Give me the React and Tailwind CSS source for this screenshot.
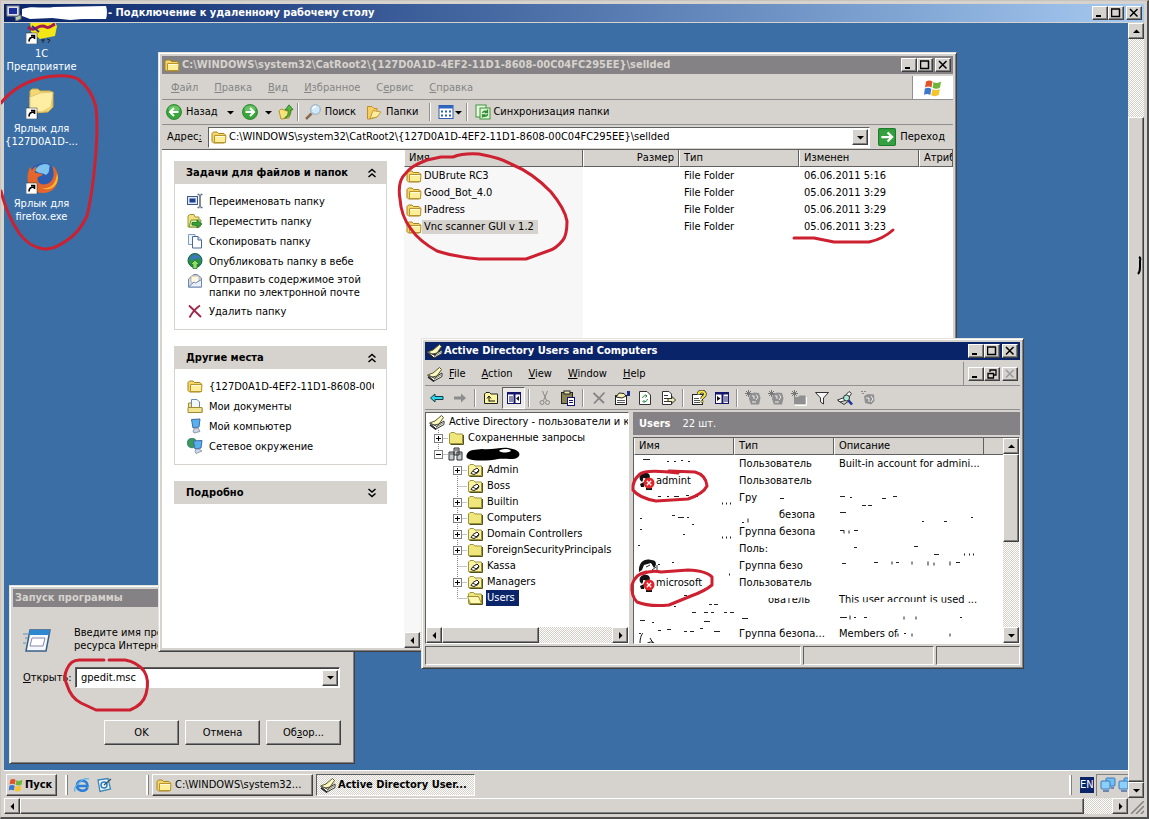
import React, { useState } from "react";

const RAISED =
  "border border-t-white border-l-white border-r-[#404040] border-b-[#404040] shadow-[inset_-1px_-1px_#808080]";
const WINDOW =
  "border border-t-[#e4e2dc] border-l-[#e4e2dc] border-r-[#404040] border-b-[#404040] shadow-[inset_1px_1px_#fff,inset_-1px_-1px_#808080] bg-[#d6d3ce]";
const SUNKEN =
  "border border-t-[#606060] border-l-[#606060] border-r-white border-b-white";
const DITHER =
  "bg-[conic-gradient(#fff_25%,#d4d0c8_0_50%,#fff_0_75%,#d4d0c8_0)] bg-[length:2px_2px]";

function Svg({ children, size = 16, box = 16 }) {
  return (
    <svg
      width={size}
      height={size}
      viewBox={`0 0 ${box} ${box}`}
      className="shrink-0"
      aria-hidden="true"
    >
      {children}
    </svg>
  );
}

function FolderIcon() {
  return (
    <Svg>
      <path d="M1 12.5V4.5L2.5 3H6l1.5 1.500H13L14.500 6v7L13.500 14H2.500Z" fill="#f5d76a" stroke="#a8841c" />
      <path d="M3.500 6.500H15L14.500 13.500H3.500Z" fill="#fdee9a" stroke="#b8942c" />
      <path d="M4.500 7.500h9" stroke="#fffbe0" />
    </Svg>
  );
}

function TreeFolder({ kind }) {
  return (
    <Svg>
      <path d="M1.500 13.500V4L3 2.500H6.500L8 4H14.500V13.500Z" fill={kind === "ou" ? "#fbf3a4" : "#efe77c"} stroke="#9c9438" />
      <path d="M15.500 5V14.500H2.500" fill="none" stroke="#56521e" />
      {kind === "ou" && (
        <path d="M4 11.500L6 8.500L10 6L12 8L11 10.500L7 12.500Z" fill="#fff" stroke="#222" />
      )}
      {kind === "ou" && <path d="M6 9L9 11L12 8" fill="none" stroke="#222" />}
      {kind === "open" && (
        <path d="M0.500 6.500H11.500L14.500 13.500H3.500Z" fill="#fdf8b4" stroke="#9c9438" />
      )}
    </Svg>
  );
}

function BookIcon() {
  return (
    <Svg>
      <path d="M0.500 9L6 7L12.500 1.500L14.500 3.500L10 10L3 11.500Z" fill="#fbf8c0" stroke="#55542c" />
      <path d="M1 9.500L7 15L15 10.500V7L10 10L8 12.500L2 9.500" fill="#fff" stroke="#333" />
      <path d="M7 13.500L14 9" stroke="#8a8a60" />
      <path d="M1 11L7 15.500" stroke="#222" strokeWidth="1.500" />
    </Svg>
  );
}

function FlagIcon({ size }) {
  return (
    <Svg size={size} box={20}>
      <path d="M3 3.500C5 2 7.500 2 9.500 3.500L8.500 9.500C6.500 8 4 8.200 2 9.500Z" fill="#e0542c" />
      <path d="M10.500 4C13 5.500 15.500 5 18 3.500L17 9.500C14.500 11 12 11 9.600 9.800Z" fill="#6fb53c" />
      <path d="M1.800 10.800C4 9.500 6.500 9.500 8.300 11L7.300 17C5 15.500 3 15.500 1 17Z" fill="#3c78d0" />
      <path d="M9.300 11.200C12 12.500 14.500 12 16.800 11L15.800 17C13 18.500 11 18.500 8.300 17.200Z" fill="#f5c52c" />
    </Svg>
  );
}

function RoundArrow({ back }) {
  return (
    <Svg>
      <circle cx="8" cy="8" r="7.500" fill="#3aa53a" stroke="#1f7d24" strokeWidth="0.800" />
      <ellipse cx="8" cy="5" rx="5.500" ry="3.500" fill="#7fd07a" opacity="0.7" />
      <path
        d={back ? "M12.500 8H4.500M8 4L4 8L8 12" : "M3.500 8H11.500M8 4L12 8L8 12"}
        fill="none"
        stroke="#fff"
        strokeWidth="2"
      />
    </Svg>
  );
}

function UpFolderIcon() {
  return (
    <Svg>
      <path d="M1 7L3 5L9 7L14 5.500L11 14L3 15Z" fill="#f8e27a" stroke="#b8962c" />
      <path d="M6.500 14C11 11 10 8 10 6H7L11 0.800L15 5.500L12.500 6C12.500 10 12 13 6.500 14Z" fill="#4fb93c" stroke="#23752a" strokeWidth="0.800" />
    </Svg>
  );
}

function SearchIcon() {
  return (
    <Svg>
      <path d="M1 15L6.500 9.500" stroke="#8b6a50" strokeWidth="2.500" />
      <circle cx="10.500" cy="5.500" r="4.800" fill="#cfe8fa" stroke="#8fa8c0" />
      <path d="M8 5a3 3 0 0 1 3-2.500" fill="none" stroke="#fff" strokeWidth="1.500" />
    </Svg>
  );
}

function FoldersIcon() {
  return (
    <Svg>
      <path d="M1.500 2.500H6L8 4.500H11V13L4 15H1.500Z" fill="#f6cf62" stroke="#c08f28" />
      <path d="M4 14.500L7 6.500L15 8L11 13Z" fill="#fdeea0" stroke="#c59a34" />
    </Svg>
  );
}

function ViewsIcon() {
  return (
    <Svg>
      <rect x="1" y="1.500" width="14" height="13" fill="#fff" stroke="#2c5fb4" />
      <rect x="1" y="1.500" width="14" height="3" fill="#2f66c0" />
      <path d="M3 7.500h10M3 11.500h10" stroke="#2c5fb4" strokeWidth="2" strokeDasharray="2 2" />
    </Svg>
  );
}

function SyncIcon() {
  return (
    <Svg>
      <rect x="1" y="1" width="10" height="12" fill="#e8f7de" stroke="#3e9440" />
      <rect x="5" y="4" width="10" height="11" fill="#dff3d2" stroke="#3e9440" />
      <path d="M7.500 9a3 3 0 0 1 5-1M12.700 10a3 3 0 0 1-5 1.500M12.500 5.500v3h-3M7.500 13.500v-2.500h3" fill="none" stroke="#2c8a34" strokeWidth="1.300" />
    </Svg>
  );
}

function GoIcon() {
  return (
    <Svg size={18}>
      <rect x="0.500" y="0.500" width="15" height="15" rx="1" fill="#35a040" stroke="#1e7d2a" />
      <path d="M3 8H12M8.500 4L12.500 8L8.500 12" fill="none" stroke="#fff" strokeWidth="2" />
    </Svg>
  );
}

function TaskIcon({ name }) {
  switch (name) {
    case "rename":
      return (
        <Svg>
          <rect x="0.500" y="3.500" width="10" height="8" fill="#dfe9f8" stroke="#405a88" />
          <rect x="2.500" y="5.500" width="6" height="4" fill="#1c3f94" />
          <path d="M10.500 1.500h2M13.500 1.500h2M13 2v12M10.500 14.500h2M13.500 14.500h2" stroke="#56657c" strokeWidth="1.500" />
        </Svg>
      );
    case "move":
      return (
        <Svg>
          <path d="M1 14V3L3 1.500H7L8 4H12V14Z" fill="#f6e07c" stroke="#9a9a3c" />
          <path d="M2 14L4 7H14L13 14Z" fill="#d9efa0" stroke="#7a9434" />
          <path d="M5 12V9.500H10V7L15 11L10 15V12.500Z" fill="#36a036" stroke="#1c6c24" strokeWidth="0.800" />
        </Svg>
      );
    case "copy":
      return (
        <Svg>
          <path d="M1.500 1.500H8V11.500H1.500Z" fill="#eef5fd" stroke="#7f9cc4" />
          <path d="M5.500 3.500H11L14.500 7V15H5.500Z" fill="#fff" stroke="#496894" />
          <path d="M11 3.500V7H14.500" fill="#cfe0f4" stroke="#496894" />
        </Svg>
      );
    case "web":
      return (
        <Svg>
          <circle cx="8" cy="7.500" r="7" fill="#2a9050" stroke="#1c5a58" />
          <path d="M1.500 5C4 6 4 2 8 1.500C12 2 13 4 14.500 6L10 5L6 7Z" fill="#3c78c0" />
          <path d="M8 7L12.500 11.500H10V15.500H6V11.500H3.500Z" fill="#8fe060" stroke="#1d6b24" strokeWidth="0.700" />
        </Svg>
      );
    case "mail":
      return (
        <Svg>
          <path d="M1.500 6L7 1.500H10L14.500 5V14H1.500Z" fill="#cddcf0" stroke="#7088ac" />
          <path d="M4 3H12V9L8 11L4 9Z" fill="#fff8e4" stroke="#b0a088" strokeWidth="0.700" />
          <path d="M1.500 14L7 9L8.500 10L14.500 6.500V14Z" fill="#e8f0fb" stroke="#7088ac" />
        </Svg>
      );
    case "delete":
      return (
        <Svg>
          <path d="M2 2.500L14 14M13 2.500C9 5 5 10 2.500 14.500" fill="none" stroke="#a02448" strokeWidth="1.800" />
        </Svg>
      );
    case "docs":
      return (
        <Svg>
          <path d="M1.500 5H5V10H15V14.500H1.500Z" fill="#f4e288" stroke="#a08c34" />
          <path d="M4.500 1.500H10L12.500 4V11H4.500Z" fill="#f2f8fe" stroke="#6c88b0" />
          <path d="M1 9.500H15V14.500H1Z" fill="#f1e594" stroke="#a08c34" />
        </Svg>
      );
    case "network":
      return (
        <Svg>
          <circle cx="5" cy="5" r="4.800" fill="#3a9a5c" stroke="#2a6a70" strokeWidth="0.700" />
          <path d="M6.500 3L15 2.500L14 10L8 11Z" fill="#58b0f0" stroke="#3d6aa4" />
          <path d="M9 11h3l3 2-6 2.500-1-2z" fill="#cdd6e4" stroke="#7884a0" strokeWidth="0.700" />
        </Svg>
      );
    case "computer":
      return (
        <Svg>
          <path d="M4.500 1.500L13 1L12 9L6 10Z" fill="#58b0f0" stroke="#3d6aa4" />
          <path d="M8 10h3l2 3.500-6 1.500-1-2z" fill="#cdd6e4" stroke="#7884a0" strokeWidth="0.800" />
        </Svg>
      );
    default:
      return <FolderIcon />;
  }
}

function ToolIcon({ name }) {
  switch (name) {
    case "back":
      return (
        <Svg>
          <path d="M1.500 8L6 4V6.500H14V9.500H6V12Z" fill="#2cd8e8" stroke="#103c50" />
        </Svg>
      );
    case "forward":
      return (
        <Svg>
          <path d="M14 8L9 3.500V6.500H2V9.500H9V12.500Z" fill="#8c8c8c" />
        </Svg>
      );
    case "up":
      return (
        <Svg>
          <path d="M1.500 13.500V4L3 2.500H6.500L8 4H14.500V13.500Z" fill="#fdf6a0" stroke="#222" />
          <path d="M6 11.500V7M4 8.500L6 6L8 8.500M6 11h6" fill="none" stroke="#111" />
        </Svg>
      );
    case "panel":
      return (
        <Svg>
          <rect x="1.500" y="2.500" width="13" height="11" fill="#fff" stroke="#14146c" />
          <path d="M1.500 3.500h13M8.500 3v10" stroke="#14146c" strokeWidth="2" />
          <path d="M3 7h4M3 9h4M3 11h4" stroke="#14146c" />
          <path d="M13 6v5L10 8.500Z" fill="#111" />
        </Svg>
      );
    case "cut":
      return (
        <Svg>
          <path d="M5.500 1L9.500 10.500M10.500 1L6.500 10.500" stroke="#888" fill="none" />
          <circle cx="5" cy="12.500" r="2" fill="none" stroke="#888" />
          <circle cx="10.500" cy="12.500" r="2" fill="none" stroke="#888" />
        </Svg>
      );
    case "paste":
      return (
        <Svg>
          <rect x="1.500" y="2.500" width="11" height="11" fill="#8a8450" stroke="#222" />
          <rect x="4" y="1" width="6" height="3" fill="#e8e4b0" stroke="#222" />
          <rect x="7.500" y="7.500" width="7" height="8" fill="#fff" stroke="#14146c" />
          <path d="M9 10.500h4M9 12.500h4" stroke="#14146c" />
        </Svg>
      );
    case "delete":
      return (
        <Svg>
          <path d="M2.500 3L13 13M13.500 2.500L3 13.500" stroke="#858585" strokeWidth="1.800" />
        </Svg>
      );
    case "props":
      return (
        <Svg>
          <rect x="1.500" y="5.500" width="11" height="9" fill="#fff" stroke="#222" />
          <path d="M3 10.500h8M3 12.500h8" stroke="#555" />
          <path d="M2 7L5 3L10 3.500L12 6L8 8Z" fill="#f4f0b0" stroke="#222" />
          <path d="M13 1h3v5h-3z" fill="#1c2f8c" />
        </Svg>
      );
    case "refresh":
      return (
        <Svg>
          <path d="M2.500 1.500H10L13.500 5V14.500H2.500Z" fill="#fff" stroke="#333" />
          <path d="M5.500 8a3 3 0 0 1 4-2M10.500 9a3 3 0 0 1-4 2.500M8.500 4.500l1.500 1.500-1.500 1.500M7.500 13L6 11.500 7.500 10" fill="none" stroke="#2d8a3c" />
        </Svg>
      );
    case "export":
      return (
        <Svg>
          <path d="M2.500 1.500H9L11.500 4V14.500H2.500Z" fill="#fff" stroke="#333" />
          <path d="M4 5.500h4M4 8.500h4M4 11.500h4" stroke="#333" />
          <path d="M8 8.500H12V6.500L15.500 10L12 13.500V11.500H8Z" fill="#f2ecb0" stroke="#333" />
        </Svg>
      );
    case "help":
      return (
        <Svg>
          <rect x="1.500" y="4.500" width="10" height="10" fill="#fff" stroke="#222" />
          <path d="M3 8.500h5M3 10.500h6M3 12.500h6" stroke="#555" />
          <path d="M7.500 4.500C7.500 0.500 14.500 0.500 14 4.500C14 6.500 11 6.500 11 9" fill="none" stroke="#333" strokeWidth="3.500" />
          <path d="M7.500 4.500C7.500 0.500 14.500 0.500 14 4.500C14 6.500 11 6.500 11 9" fill="none" stroke="#f6e540" strokeWidth="2" />
          <circle cx="11" cy="11.500" r="1.300" fill="#f6e540" stroke="#333" strokeWidth="0.600" />
        </Svg>
      );
    case "panelRight":
      return (
        <Svg>
          <rect x="1.500" y="2.500" width="13" height="11" fill="#fff" stroke="#14146c" />
          <path d="M1.500 3.500h13M8.500 3v10" stroke="#14146c" strokeWidth="2" />
          <path d="M10 7h4M10 9h4M10 11h4" stroke="#14146c" />
          <path d="M3 6v5L6.500 8.500Z" fill="#111" />
        </Svg>
      );
    case "filter":
      return (
        <Svg>
          <path d="M1.500 2.500H14.500L9.500 8V14L6.500 12V8Z" fill="#f4f4f4" stroke="#333" />
        </Svg>
      );
    case "find":
      return (
        <Svg>
          <path d="M0.500 10L6 8L12 1.500L14.500 3.500L10 10L3 12Z" fill="#fff" stroke="#333" />
          <path d="M1 10.500L7 14.500L13 10" fill="none" stroke="#333" />
          <circle cx="9.500" cy="8" r="3" fill="#a5ecd8" stroke="#333" />
          <path d="M11.500 10.500L15 14.500" stroke="#1c2f9c" strokeWidth="2.500" />
        </Svg>
      );
    case "folderNew":
      return (
        <Svg>
          <path d="M1 1l5 5M6 1L1 6M3.500 0v7M0 3.500h7" stroke="#777" />
          <path d="M3 7H7L8.500 5.500H14.500V14H3Z" fill="#909090" />
          <path d="M15.500 7V15.500H4" fill="none" stroke="#fff" />
        </Svg>
      );
    case "history":
      return (
        <Svg>
          <path d="M1 1.500h5M2 3.500h3" stroke="#888" strokeDasharray="2 1" />
          <path d="M4 6L8 4L14 4.500L14.500 11L11 14.500L5 13Z" fill="#919191" />
          <path d="M6 8h3v4M11 6l2 3-2 3" fill="none" stroke="#f0f0f0" />
        </Svg>
      );
    default:
      return (
        <Svg>
          <path d="M1 1l5 5M6 1L1 6M3.500 0v7M0 3.500h7" stroke="#777" />
          <path d="M5 4L9 2.500L14 3L15.500 8L14 14.500H6L4 9Z" fill="#8f8f8f" />
          <path d="M7 6h2v3M11 4.500l2 2.500-2 3M7 12h4" fill="none" stroke="#efefef" />
        </Svg>
      );
  }
}

function Arrow({ dir }) {
  const paths = {
    up: "M1 6L4.500 2.500L8 6Z",
    down: "M1 3L4.500 6.500L8 3Z",
    left: "M6 1L2.500 4.500L6 8Z",
    right: "M3 1L6.500 4.500L3 8Z",
  };
  return (
    <Svg size={9} box={9}>
      <path d={paths[dir]} fill="#000" />
    </Svg>
  );
}

function ScrollButton({ dir, label }) {
  return (
    <button
      type="button"
      aria-label={label}
      className={`flex size-4 shrink-0 items-center justify-center bg-[#d6d3ce] ${RAISED}`}
    >
      <Arrow dir={dir} />
    </button>
  );
}

function CaptionButton({ kind, disabled }) {
  const color = disabled ? "#999" : "#000";
  return (
    <button
      type="button"
      aria-label={kind}
      disabled={disabled}
      className={`flex h-[14px] w-4 items-center justify-center bg-[#d6d3ce] ${RAISED}`}
    >
      <Svg size={10} box={10}>
        {kind === "minimize" && <path d="M1 8h5" stroke={color} strokeWidth="2" />}
        {kind === "maximize" && (
          <path d="M0.500 1V8.500H8.500V1M0 1H9" fill="none" stroke={color} strokeWidth="1.500" />
        )}
        {kind === "restore" && (
          <path d="M3 3V1H9V6H6.500M1 4.500H6.500V9H1Z" fill="none" stroke={color} strokeWidth="1.300" />
        )}
        {kind === "close" && (
          <path d="M1 1L8.500 8.500M8.500 1L1 8.500" stroke={color} strokeWidth="1.500" />
        )}
      </Svg>
    </button>
  );
}

function CaptionButtons() {
  return (
    <div className="ml-auto flex pr-[2px]">
      <CaptionButton kind="minimize" />
      <CaptionButton kind="maximize" />
      <div className="ml-[2px] flex">
        <CaptionButton kind="close" />
      </div>
    </div>
  );
}

function Separator() {
  return (
    <div className="mx-[3px] h-[18px] w-[2px] shrink-0 border-l border-l-[#909090] border-r border-r-white" />
  );
}

// The letter at `at` is the keyboard shortcut
function Hot({ text, at = 0 }) {
  return (
    <>
      {text.slice(0, at)}
      <u>{text[at]}</u>
      {text.slice(at + 1)}
    </>
  );
}

const desktopIcons = [
  { id: "1c", lines: ["1С", "Предприятие"] },
  { id: "folder", lines: ["Ярлык для", "{127D0A1D-..."] },
  { id: "firefox", lines: ["Ярлык для", "firefox.exe"] },
];

function DesktopIcon({ id }) {
  return (
    <Svg size={32} box={32}>
      {id === "1c" && (
        <>
          <path d="M4 8L26 4L31 14L29 24L14 27L5 20Z" fill="#f4e614" />
          <path d="M2 15C10 22 12 10 20 15C24 17 26 13 29 12" fill="none" stroke="#a01c50" strokeWidth="3" />
          <path d="M6 14L13 20M16 10L28 8" stroke="#3a3090" strokeWidth="2" />
          <path d="M17 27v4M15 28h4M21 27l3 1-2 3" fill="none" stroke="#222" />
        </>
      )}
      {id === "folder" && (
        <>
          <path d="M4 22V4L6 2H12L14 4H24L27 6V20L22 25L6 26Z" fill="#f3d873" stroke="#d0ac44" />
          <path d="M4 10L14 6L27 5L25 20L16 25L4 24Z" fill="#fdeea4" stroke="#e4c870" />
        </>
      )}
      {id === "firefox" && (
        <>
          <circle cx="17" cy="15" r="14" fill="#2c5db0" />
          <path d="M9 8C13 2 20 0 24 4C22 6 25 10 20 13C15 10 12 12 9 8Z" fill="#7fc4ee" />
          <path d="M4 5C-2 18 3 31 17 31C29 31 34 20 31 10C30 6 27 4 26 4C29 11 28 20 21 22C14 24 10 19 12 15L17 13C14 11 10 11 9 11C9 8 10 5 11 4C8 5 7 7 6 8Z" fill="#e5662a" />
          <path d="M31 11C30 23 24 27 16 26C24 30 32 24 32 15Z" fill="#f8b838" />
        </>
      )}
      <rect x="0" y="21" width="11" height="11" fill="#fff" stroke="#222" strokeWidth="0.500" />
      <path d="M3 29.500C3 26 5 25 8 25M5 23.500H8.500V27" fill="none" stroke="#000" strokeWidth="1.600" />
    </Svg>
  );
}

const tasks = [
  { icon: "rename", text: "Переименовать папку" },
  { icon: "move", text: "Переместить папку" },
  { icon: "copy", text: "Скопировать папку" },
  { icon: "web", text: "Опубликовать папку в вебе" },
  { icon: "mail", text: "Отправить содержимое этой папки по электронной почте" },
  { icon: "delete", text: "Удалить папку" },
];

const places = [
  { icon: "folder", text: "{127D0A1D-4EF2-11D1-8608-00C" },
  { icon: "docs", text: "Мои документы" },
  { icon: "computer", text: "Мой компьютер" },
  { icon: "network", text: "Сетевое окружение" },
];

function TaskPanel({ title, items }) {
  return (
    <section>
      <h2 className="bg-[#d6d3ce]">
        <button type="button" className="flex h-[23px] w-full items-center justify-between pr-[10px] pl-3 font-bold">
          {title}
          <Svg size={10} box={10}>
            <path
              d={items ? "M1.500 4.500L5 1.500L8.500 4.500M1.500 9L5 6L8.500 9" : "M1.500 1L5 4L8.500 1M1.500 5.500L5 8.500L8.500 5.500"}
              fill="none"
              stroke="#000"
              strokeWidth="1.500"
            />
          </Svg>
        </button>
      </h2>
      {items && (
        <ul className="flex flex-col gap-1 border border-t-0 border-[#d6d3ce] px-3 pt-[9px] pb-[10px]">
          {items.map((item) => (
            <li key={item.text}>
              <button type="button" className="flex min-h-4 w-full items-center gap-[6px] text-left leading-[13px]">
                <span className="h-4 self-start">
                  <TaskIcon name={item.icon} />
                </span>
                <span
                  className={`min-w-0 flex-1 ${
                    item.icon === "folder" ? "overflow-hidden whitespace-nowrap" : ""
                  }`}
                >
                  {item.text}
                </span>
              </button>
            </li>
          ))}
        </ul>
      )}
    </section>
  );
}

const files = [
  { name: "DUBrute RC3", date: "06.06.2011 5:16" },
  { name: "Good_Bot_4.0", date: "05.06.2011 3:29" },
  { name: "IPadress", date: "05.06.2011 3:29" },
  { name: "Vnc scanner GUI v 1.2", date: "05.06.2011 3:23", selected: true },
];

const TH =
  "h-[17px] overflow-hidden border-b border-b-[#606060] border-r border-r-[#606060] border-l border-l-white bg-[#d6d3ce] px-1 font-normal whitespace-nowrap";

function ExplorerWindow() {
  const [path, setPath] = useState(
    "C:\\WINDOWS\\system32\\CatRoot2\\{127D0A1D-4EF2-11D1-8608-00C04FC295EE}\\sellded"
  );

  return (
    <section className={`absolute top-[29px] left-[154px] flex h-[600px] w-[799px] flex-col p-[3px] ${WINDOW}`}>
      <header className="flex h-[18px] items-center gap-[2px] bg-[#848284] pl-[2px] font-bold text-[#d6d3ce]">
        <FolderIcon />
        <h1>C:\WINDOWS\system32\CatRoot2\&#123;127D0A1D-4EF2-11D1-8608-00C04FC295EE&#125;\sellded</h1>
        <CaptionButtons />
      </header>

      <div className="mt-[2px] flex h-6 items-stretch border-b border-[#909090] text-[#858585]">
        <nav className="flex flex-1 items-center gap-4 border-r border-[#909090] pl-[9px]">
          <button type="button"><Hot text="Файл" /></button>
          <button type="button"><Hot text="Правка" /></button>
          <button type="button"><Hot text="Вид" /></button>
          <button type="button"><Hot text="Избранное" /></button>
          <button type="button"><Hot text="Сервис" at={1} /></button>
          <button type="button"><Hot text="Справка" /></button>
        </nav>
        <div className="flex w-10 items-center justify-center bg-white">
          <FlagIcon size={20} />
        </div>
      </div>

      <div className="flex h-[25px] items-center border-b border-[#909090] pl-[4px]">
        <button type="button" className="flex items-center gap-1"><RoundArrow back />Назад</button>
        <button type="button" aria-label="Назад: список" className="w-6 pl-2"><Arrow dir="down" /></button>
        <button type="button" aria-label="Вперед"><RoundArrow /></button>
        <button type="button" aria-label="Вперед: список" className="w-5 pl-[6px]"><Arrow dir="down" /></button>
        <button type="button" aria-label="Вверх"><UpFolderIcon /></button>
        <Separator />
        <button type="button" className="ml-[3px] flex items-center gap-1"><SearchIcon />Поиск</button>
        <button type="button" className="mr-2 ml-[10px] flex items-center gap-1"><FoldersIcon />Папки</button>
        <Separator />
        <button type="button" aria-label="Вид папки" className="ml-1 flex items-center"><ViewsIcon /><Arrow dir="down" /></button>
        <Separator />
        <button type="button" className="ml-1 flex items-center gap-[2px]"><SyncIcon />Синхронизация папки</button>
      </div>

      <div className="flex h-[25px] items-center border-b border-[#606060] pr-2 pl-[5px]">
        <label htmlFor="address" className="w-[41px]"><Hot text="Адрес:" at={5} /></label>
        <div className={`flex h-[21px] min-w-0 flex-1 items-center bg-white pr-px pl-[2px] ${SUNKEN}`}>
          <FolderIcon />
          <input
            id="address"
            value={path}
            onChange={(e) => setPath(e.target.value)}
            className="ml-[2px] min-w-0 flex-1 outline-none"
          />
          <ScrollButton dir="down" label="Список адресов" />
        </div>
        <button type="button" className="ml-2 flex items-center gap-1"><GoIcon />Переход</button>
      </div>

      <div className="flex min-h-0 flex-1 bg-white">
        <aside className="flex w-[242px] shrink-0 flex-col gap-4 pt-[11px] pr-[17px] pl-3">
          <TaskPanel title="Задачи для файлов и папок" items={tasks} />
          <TaskPanel title="Другие места" items={places} />
          <TaskPanel title="Подробно" />
        </aside>
        <div className="flex min-w-0 flex-1 flex-col justify-between overflow-hidden bg-[linear-gradient(to_right,#f7f7f7_179px,#fff_179px)]">
          <table className="w-full table-fixed border-separate border-spacing-0 text-left">
            <thead>
              <tr>
                <th className={`w-[179px] ${TH}`}>Имя</th>
                <th className={`w-[96px] text-right ${TH}`}>Размер</th>
                <th className={`w-[120px] ${TH}`}>Тип</th>
                <th className={`w-[120px] ${TH}`}>Изменен</th>
                <th className={TH}>Атриб</th>
              </tr>
            </thead>
            <tbody>
              {files.map((file) => (
                <tr key={file.name} className="h-[17px]">
                  <td className="p-0 pl-[2px]">
                    <div className="flex items-center">
                      <FolderIcon />
                      <span className={file.selected ? "bg-[#d6d3ce] pr-1 pl-[2px]" : "pl-[2px]"}>
                        {file.name}
                      </span>
                    </div>
                  </td>
                  <td />
                  <td className="p-0 pl-[5px]">File Folder</td>
                  <td className="p-0 pl-[5px]">{file.date}</td>
                  <td />
                </tr>
              ))}
            </tbody>
          </table>
          <div className={`flex justify-between ${DITHER}`}>
            <ScrollButton dir="left" label="Влево" />
            <ScrollButton dir="right" label="Вправо" />
          </div>
        </div>
      </div>
    </section>
  );
}

const treeNodes = [
  { text: "Admin", kind: "ou", expander: true },
  { text: "Boss", kind: "ou" },
  { text: "Builtin", kind: "folder", expander: true },
  { text: "Computers", kind: "folder", expander: true },
  { text: "Domain Controllers", kind: "ou", expander: true },
  { text: "ForeignSecurityPrincipals", kind: "folder", expander: true },
  { text: "Kassa", kind: "ou" },
  { text: "Managers", kind: "ou", expander: true },
  { text: "Users", kind: "open", selected: true, last: true },
];

function Branch({ expander, open, last, first }) {
  return (
    <svg width="19" height="16" className="shrink-0" aria-hidden="true">
      <path
        d={`M9.500 ${first ? 4 : 0}V${last ? 8 : 16}M9.500 8.500H19`}
        stroke="#888"
        strokeDasharray="1 1"
        fill="none"
      />
      {expander && (
        <>
          <rect x="5.500" y="4.500" width="8" height="8" fill="#fff" stroke="#808080" />
          <path d={open ? "M7 8.500h5" : "M7 8.500h5M9.500 6v5"} stroke="#000" />
        </>
      )}
    </svg>
  );
}

const objects = [
  { type: "Пользователь", about: "Built-in account for admini..." },
  { name: "admint", type: "Пользователь" },
  { type: "Гру" },
  { type: "безопа", indent: "pl-[40px]" },
  { type: "Группа безопа" },
  { type: "Поль:" },
  { type: "Группа безо" },
  { name: "microsoft", type: "Пользователь" },
  { type: "ователь", indent: "pl-[29px]", about: "This user account is used ..." },
  { type: "" },
  { type: "Группа безопа...", about: "Members of" },
];

function UserIcon() {
  return (
    <Svg size={18} box={18}>
      <path d="M2 8C0 2 6 0 9 1C13 2 12 6 11 8L6 6L4 10Z" fill="#111" />
      <path d="M2 12L6 10V15H3Z" fill="#111" />
      <path d="M8 16h6v2H8Z" fill="#111" />
      <path d="M5 6L9 8L8 11L5 10Z" fill="#fff" />
      <circle cx="11" cy="11" r="5.500" fill="#e0242c" />
      <path d="M8.800 8.800L13.200 13.200M13.200 8.800L8.800 13.200" stroke="#fff" strokeWidth="1.300" />
    </Svg>
  );
}

// Leftovers of the rubbed-out rows, drawn over the list
function ErasedRows() {
  return (
    <svg className="pointer-events-none block" width="370" height="190" aria-hidden="true">
      <path
        d="M140 63l20 1 26-1v6H140zM130 137h60v5l-30 1h-30zM206 148l30 -1h60l50 2v4H206zM102 171h22l10 3h-32zM206 184l60 -1 60-1v-5h20v13H206z"
        fill="#fff"
      />
      <path
        d="M9 4.500h7M33 6.500h2M40 6.500h2M47 5.500h2M54 6.500h2M24 41.500h3M33 41.500h2M40 41.500h5M52 40.500h3M62 41.500h2M6 63.500h2M38 60.500h3M44 62.500h6M53 62.500h2M6 74.500h2M58 69.500h2M49 79.500h2M4 90.500h2M24 109.500h2M38 107.500h2M50 140.500h3M40 151.500h2M75 149.500h3M80 149.500h4M58 157.500h4M70 157.500h4M77 157.500h3M90 157.500h3M96 157.500h4M6 165.500h5M18 167.500h2M70 166.500h6M24 175.500h3M33 174.500h4M50 176.500h3M56 176.500h4M66 173.500h3M80 176.500h6M5 178.500h2"
        stroke="#222"
        fill="none"
      />
      <path
        d="M146 43.500h4M206 41.500h5M216 42.500h2M248 43.500h4M259 41.500h4M228 50.500h4M234 50.500h4M108 67.500h2M114 63.500v4M206 57.500h6M288 66.500h2M310 66.500h3M337 62.500h2M206 75.500h4v3M215 75.500v3M220 75.500h4M220 92.500h3M280 91.500h4M300 99.500h5M208 108.500h4M240 107.500h4M258 106.500v3M262 107.500h3M278 106.500v3M294 106.500v4M300 107.500v3M316 106.500v4M322 107.500h4M108 163.500h6M206 162.500h7M216 160.500v4M220 162.500h2M230 162.500h3M270 161.500v3M282 161.500v3M326 162.500h2M264 178.500v3M270 178.500h2M278 178.500v3M316 178.500v3"
        stroke="#222"
        fill="none"
      />
      <path d="M330 99.500h1M335 99.500h1M339 99.500h1M88 82.500h1M92 82.500h1M96 82.500h1M88 48.500h1M92 48.500h1M96 48.500h1M95 119.500h1" stroke="#222" strokeWidth="2" />
      <path d="M5 117C4 107 11 103 17 105C23 105 23 110 20 113L17 108L10 110L8 115Z" fill="#111" />
      <path d="M12 112l4-2M18 115l4-3M23 110v6" fill="none" stroke="#333" />
      <path d="M6 188C6 182 8 179 9 178M16 183l3 5M12 189c4-3 8-2 9 0" fill="none" stroke="#111" />
    </svg>
  );
}

function DirectoryWindow() {
  return (
    <section className={`absolute top-[315px] left-[417px] flex h-[331px] w-[603px] flex-col p-[3px] ${WINDOW}`}>
      <header className="flex h-[18px] items-center gap-px bg-[#0a246a] pl-[2px] font-bold text-white">
        <BookIcon />
        <h1>Active Directory Users and Computers</h1>
        <CaptionButtons />
      </header>

      <div className="mt-[2px] flex h-6 items-center border-b border-[#909090] px-[2px]">
        <BookIcon />
        <nav className="ml-[6px] flex h-full flex-1 items-center gap-4 border-r border-[#909090]">
          <button type="button"><Hot text="File" /></button>
          <button type="button"><Hot text="Action" /></button>
          <button type="button"><Hot text="View" /></button>
          <button type="button"><Hot text="Window" /></button>
          <button type="button"><Hot text="Help" /></button>
        </nav>
        <div className="ml-1 flex">
          <CaptionButton kind="minimize" />
          <CaptionButton kind="restore" />
          <div className="ml-[2px] flex"><CaptionButton kind="close" disabled /></div>
        </div>
      </div>

      <div className="flex h-6 items-center border-b border-[#909090]">
        {[
          ["back", "forward"],
          ["up", "panel"],
          ["cut", "paste"],
          ["delete", "props", "refresh", "export"],
          ["help", "panelRight"],
          ["newUser", "newGroup", "folderNew", "filter", "find", "history"],
        ].map((group, i) => (
          <React.Fragment key={group[0]}>
            {i > 0 && <Separator />}
            {group.map((name) => (
              <button
                key={name}
                type="button"
                aria-label={name}
                className={`flex h-[22px] w-[23px] items-center justify-center ${
                  name === "panel" ? `bg-[#eceae6] ${SUNKEN}` : ""
                }`}
              >
                <ToolIcon name={name} />
              </button>
            ))}
          </React.Fragment>
        ))}
      </div>

      <div className="mt-[2px] flex min-h-0 flex-1 gap-1">
        <div className={`flex w-[204px] shrink-0 flex-col justify-between overflow-hidden bg-white ${SUNKEN}`}>
          <ul className="pt-px pl-[3px] leading-4 whitespace-nowrap">
            <li className="flex h-4 items-center gap-1">
              <BookIcon />
              <span className="min-w-0 flex-1 overflow-hidden">Active Directory - пользователи и ко</span>
            </li>
            <li className="flex h-4 items-center gap-1">
              <div className="flex"><Branch expander /><TreeFolder kind="folder" /></div>
              Сохраненные запросы
            </li>
            <li>
              <div className="flex h-4 items-center">
                <Branch expander open last />
                <Svg>
                  <path d="M6 2h5v7H6zM1 6h5v8H1zM9 6h5v8H9z" fill="#c8ccd0" stroke="#333" />
                  <path d="M2 8h3M10 8h3M7 4h3" stroke="#555" />
                </Svg>
                <svg width="56" height="16" aria-hidden="true">
                  <path d="M3 8C5 3 12 4 18 3C28 4 38 1 44 2C52 3 57 6 55 10C52 15 42 12 34 13C24 15 10 15 5 13C2 12 2 10 3 8Z" fill="#000" />
                  <path d="M36 4c5-2 10-1 11 1c-3 2-8 2-12 0" fill="#fff" />
                </svg>
              </div>
              <ul>
                {treeNodes.map((node, i) => (
                  <li key={node.text} className="flex h-4 items-center pl-[19px]">
                    <Branch expander={node.expander} last={node.last} first={i === 0} />
                    <TreeFolder kind={node.kind} />
                    <button
                      type="button"
                      className={`ml-[3px] h-4 pr-1 pl-px ${node.selected ? "bg-[#0a246a] text-white" : ""}`}
                    >
                      {node.text}
                    </button>
                  </li>
                ))}
              </ul>
            </li>
          </ul>
          <div className={`flex ${DITHER}`}>
            <ScrollButton dir="left" label="Влево" />
            <div className={`h-4 w-[97px] bg-[#d6d3ce] ${RAISED}`} />
            <div className="flex-1" />
            <ScrollButton dir="right" label="Вправо" />
          </div>
        </div>

        <div className="flex min-w-0 flex-1 flex-col">
          <div className="flex h-[23px] shrink-0 items-center gap-3 bg-[#848284] px-[6px] text-white">
            <h2 className="font-bold">Users</h2>
            <span>22 шт.</span>
          </div>
          <div className={`mt-[2px] flex min-h-0 flex-1 overflow-hidden bg-white ${SUNKEN}`}>
            <div className="relative min-w-0 flex-1">
              <table className="w-full table-fixed border-separate border-spacing-0 text-left">
                <thead>
                  <tr>
                    <th className={`w-[100px] ${TH}`}>Имя</th>
                    <th className={`w-[100px] ${TH}`}>Тип</th>
                    <th className={`w-[150px] ${TH}`}>Описание</th>
                    <td className="border-b border-[#606060] bg-[#d6d3ce] p-0" />
                  </tr>
                </thead>
                <tbody>
                  {objects.map((item, i) => (
                    <tr key={i} className="h-[17px] leading-[17px] whitespace-nowrap">
                      <td className="p-0">
                        {item.name && (
                          <div className="flex h-[17px] items-center pl-[4px]">
                            <UserIcon />
                            {item.name}
                          </div>
                        )}
                      </td>
                      <td className="p-0 pl-[5px]">
                        <div className={item.indent}>{item.type}</div>
                      </td>
                      <td className="p-0 pl-[5px]">{item.about}</td>
                      <td />
                    </tr>
                  ))}
                </tbody>
              </table>
              <div className="absolute top-[17px] left-0">
                <ErasedRows />
              </div>
            </div>
            <div className={`flex w-4 shrink-0 flex-col ${DITHER}`}>
              <ScrollButton dir="up" label="Вверх" />
              <div className={`h-[88px] bg-[#d6d3ce] ${RAISED}`} />
              <div className="flex-1" />
              <ScrollButton dir="down" label="Вниз" />
            </div>
          </div>
        </div>
      </div>

      <footer className="mt-[2px] flex h-[19px] shrink-0 gap-[2px]">
        <div className={`flex-1 ${SUNKEN}`} />
        <div className={`w-[131px] ${SUNKEN}`} />
        <div className={`w-[84px] ${SUNKEN}`} />
      </footer>
    </section>
  );
}

function RunDialog() {
  const [command, setCommand] = useState("gpedit.msc");

  return (
    <section className={`absolute top-[562px] left-[5px] flex h-[179px] w-[346px] flex-col p-[3px] ${WINDOW}`}>
      <header className="flex h-[18px] items-center bg-[#848284] pl-[2px] font-bold text-[#d6d3ce]">
        <h1>Запуск программы</h1>
      </header>
      <form className="flex flex-1 flex-col px-[10px]" onSubmit={(e) => e.preventDefault()}>
        <div className="flex gap-[23px] pt-[19px]">
          <Svg size={28} box={28}>
            <path d="M7 4H27L23 25H3Z" fill="#f4f8fc" stroke="#3a5f86" strokeWidth="1.500" />
            <path d="M7 4H27L26 9H6Z" fill="#2e88d0" />
            <path d="M9 12H22L20 20H7Z" fill="#fff" stroke="#88a" />
            <path d="M0 8h5M2 12h3M0 17h3" stroke="#5c90c0" />
          </Svg>
          <p className="leading-[13px]">
            Введите имя прог
            <br />
            ресурса Интернет
          </p>
        </div>
        <div className="mt-[13px] flex items-center">
          <label htmlFor="command" className="w-[52px] shrink-0"><Hot text="Открыть:" /></label>
          <div className={`flex h-[21px] w-[265px] items-center bg-white p-px ${SUNKEN} shadow-[inset_1px_1px_#404040]`}>
            <input
              id="command"
              value={command}
              onChange={(e) => setCommand(e.target.value)}
              className="min-w-0 flex-1 bg-transparent pl-1 outline-none"
            />
            <ScrollButton dir="down" label="Список команд" />
          </div>
        </div>
        <div className="mt-[32px] flex justify-end gap-[6px]">
          <button type="submit" className={`h-[25px] w-[75px] ${RAISED}`}>OK</button>
          <button type="button" className={`h-[25px] w-[75px] ${RAISED}`}>Отмена</button>
          <button type="button" className={`h-[25px] w-[75px] ${RAISED}`}><Hot text="Обзор..." at={2} /></button>
        </div>
      </form>
    </section>
  );
}

function NetIcon() {
  return (
    <Svg size={18} box={18}>
      <rect x="7" y="2" width="9" height="8" rx="1" fill="#70c0f4" stroke="#3d78b8" />
      <rect x="2" y="5" width="9" height="8" rx="1" fill="#8ad0fa" stroke="#3d78b8" />
      <path d="M4 15h6M12 12h3" stroke="#6c88b0" strokeWidth="2" />
    </Svg>
  );
}

function Taskbar() {
  return (
    <footer className="flex h-7 shrink-0 items-center overflow-hidden border-t border-white bg-[#d6d3ce] whitespace-nowrap">
      <button type="button" className={`ml-[2px] flex h-[22px] w-[51px] items-center gap-px pl-px font-bold ${RAISED}`}>
        <FlagIcon size={16} />Пуск
      </button>
      <div className="ml-2 h-5 w-[3px] border-r border-r-[#808080] bg-white" />
      <div className="ml-[6px] flex w-[72px] gap-[6px]">
        <button type="button" aria-label="Internet Explorer">
          <Svg>
            <path d="M13.500 10.500C11 16 3 14 3 8.500C3 2 13.500 2 13.500 9H4" fill="none" stroke="#2a80d8" strokeWidth="2.600" />
            <path d="M1 14.500C-1 10 9 0 15 2" fill="none" stroke="#58b0ea" strokeWidth="1.300" />
          </Svg>
        </button>
        <button type="button" aria-label="Рабочий стол">
          <Svg>
            <path d="M2 3L12 1.500L14.500 12L4 14.500Z" fill="#eef6fd" stroke="#3c88b8" strokeWidth="1.300" />
            <circle cx="8" cy="8" r="3" fill="none" stroke="#2c80c0" strokeWidth="1.500" />
            <path d="M8 8L15 2" stroke="#3a4c60" strokeWidth="1.300" />
          </Svg>
        </button>
      </div>
      <div className="h-5 w-[3px] border-r border-r-[#808080] bg-white" />
      <button type="button" className={`ml-[3px] flex h-[22px] w-[161px] items-center gap-[3px] pl-[3px] ${RAISED}`}>
        <FolderIcon />C:\WINDOWS\system32...
      </button>
      <button type="button" className={`ml-[3px] flex h-[22px] w-[159px] items-center gap-[2px] pl-[3px] font-bold ${SUNKEN} ${DITHER}`}>
        <BookIcon />Active Directory User...
      </button>
      <div className="ml-auto h-5 w-[3px] border-r border-r-[#808080] bg-white" />
      <span className="ml-2 h-4 w-[14px] overflow-hidden bg-[#0a246a] leading-4 text-white">EN</span>
      <div className="ml-[2px] flex h-[22px] w-[32px] items-center overflow-hidden border-t border-l border-[#808080] pl-[2px]">
        <NetIcon />
        <NetIcon />
      </div>
    </footer>
  );
}

function RedMarks() {
  return (
    <svg className="pointer-events-none absolute inset-0 size-full" aria-hidden="true">
      <g fill="none" stroke="#cd2030" strokeWidth="3" strokeLinecap="round" strokeLinejoin="round">
        <path d="M0 102Q14 84 40 77Q65 72 77 78Q90 87 95 106Q97 125 95 150Q92 190 86 215Q78 232 65 240Q52 249 43 248Q28 246 18 232Q5 212 0 190" />
        <path d="M426 159L440 156L452 156Q462 152 478 153Q500 157 510 163Q532 172 550 191Q564 208 566 220Q566 234 562 239Q555 248 547 250L525 258H478Q450 255 436 250Q418 240 410 228Q400 215 399 198Q396 180 405 172Q410 165 426 159" />
        <path d="M793 237H813L833 241H868Q882 238 892 229" />
        <path d="M677 472Q645 468 639 473Q631 480 632 489Q638 497 655 500L687 498Q702 493 706 485Q705 474 694 471L668 470" />
        <path d="M641 573Q650 569 660 571L687 569Q706 570 711 576V584Q704 590 690 595L668 604Q648 606 636 601Q630 595 631 584Q634 573 645 571" />
        <path d="M103 659H80Q70 658 66 668Q62 676 66 684Q70 697 80 702L95 709H129Q142 704 145 693Q149 679 143 670Q136 661 124 659H108" />
      </g>
      <path d="M1138 256q2 1 1 4v6q0 5-2 7" fill="none" stroke="#000" strokeWidth="2" />
    </svg>
  );
}

export default function App() {
  return (
    <div className="relative flex h-screen flex-col overflow-hidden border-t border-r-2 border-b-2 border-l border-t-[#c8c4bc] border-r-[#505050] border-b-[#505050] border-l-[#c8c4bc] bg-[#d6d3ce] p-[3px] font-['DejaVu_Sans_Condensed','DejaVu_Sans',sans-serif] text-[11px] leading-[14px] text-black">
      <header className="flex h-[18px] shrink-0 items-center bg-linear-to-r from-[#0a246a] to-[#a6caf0] pl-[2px] font-bold text-white">
        <Svg>
          <rect x="1" y="1" width="12" height="10" fill="#d8e0ec" stroke="#888" />
          <rect x="3" y="3" width="8" height="6" fill="#1c2f9c" />
          <path d="M9 12l6-2v4l-5 2z" fill="#b8d0a8" stroke="#667" />
        </Svg>
        <svg width="86" height="18" aria-hidden="true">
          <path d="M0 5C10 1 20 5 32 3L84 2Q86 8 84 15H60L48 16L30 14L8 15L0 12Z" fill="#fff" />
        </svg>
        <h1>- Подключение к удаленному рабочему столу</h1>
        <CaptionButtons />
      </header>

      <div className="mt-px flex min-h-0 flex-1">
        <div className="flex min-w-0 flex-1 flex-col">
          <main className="relative min-h-0 flex-1 overflow-hidden bg-[#3a6ea5]">
            <ul className="-mt-[11px] flex w-[75px] flex-col gap-[14px]">
              {desktopIcons.map((icon) => (
                <li key={icon.id} className="flex flex-col items-center gap-[3px] text-center leading-[13px] whitespace-nowrap text-white">
                  <DesktopIcon id={icon.id} />
                  <span>
                    {icon.lines[0]}
                    <br />
                    {icon.lines[1]}
                  </span>
                </li>
              ))}
            </ul>
            <RunDialog />
            <ExplorerWindow />
            <DirectoryWindow />
          </main>
          <Taskbar />
        </div>
        <div className={`flex w-4 shrink-0 flex-col ${DITHER}`}>
          <ScrollButton dir="up" label="Вверх" />
          <div className="h-[78px]" />
          <div className={`flex-1 bg-[#d6d3ce] ${RAISED}`} />
          <ScrollButton dir="down" label="Вниз" />
        </div>
      </div>

      <div className={`flex h-4 shrink-0 ${DITHER}`}>
        <ScrollButton dir="left" label="Влево" />
        <div className={`flex-1 bg-[#d6d3ce] ${RAISED}`} />
        <div className="w-[28px]" />
        <ScrollButton dir="right" label="Вправо" />
        <div className="flex w-4 items-end justify-end bg-[#d6d3ce]">
          <Svg size={13} box={13}>
            <path d="M0 13L13 0M5 13L13 5M10 13L13 10" stroke="#808080" strokeWidth="1.500" />
          </Svg>
        </div>
      </div>
      <RedMarks />
    </div>
  );
}
